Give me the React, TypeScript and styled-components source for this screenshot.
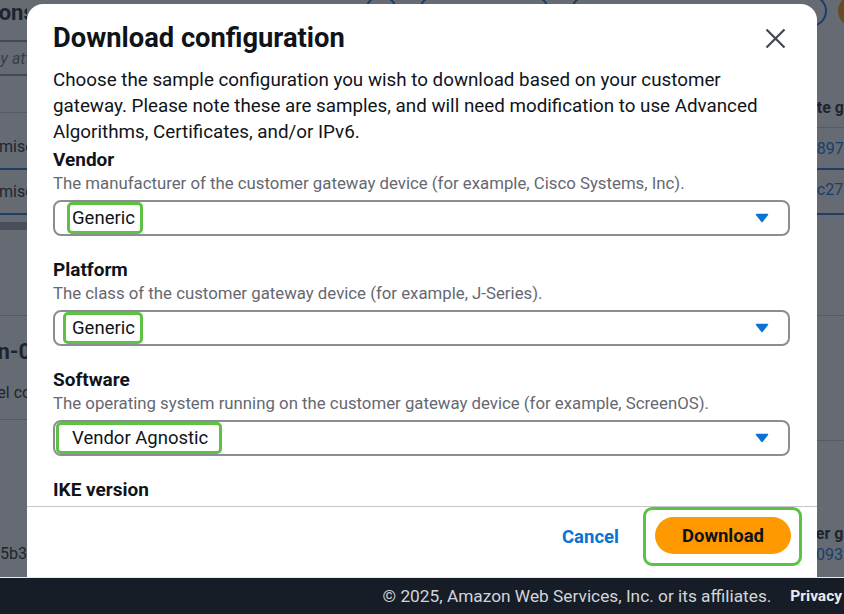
import styled, { createGlobalStyle } from "styled-components";

const GlobalStyle = createGlobalStyle`
  html, body {
    margin: 0;
    padding: 0;
    height: 100%;
    overflow: hidden;
  }
  body {
    font-family: Roboto, "Liberation Sans", Arial, sans-serif;
    color: #0f141a;
    background: #ffffff;
  }
  #root {
    height: 100%;
  }
`

const Page = styled.div`
  height: 100vh;
  display: flex;
  flex-direction: column;
`

const Main = styled.div`
  flex: 1;
  position: relative;
  overflow: hidden;
`

/* the console page behind the modal: only its edges show */
const Backdrop = styled.div`
  display: flex;
  flex-direction: column;
`

const TopBar = styled.div`
  display: flex;
  align-items: center;
  height: 32px;
  margin: -5px -26px 0 0;
  flex-shrink: 0;
`

const ToolButtons = styled.div`
  margin-left: auto;
  display: flex;
  gap: 22px;
`

const OutlineButton = styled.div<{ $w: number }>`
  width: ${p => p.$w}px;
  height: 32px;
  box-sizing: border-box;
  border: 2px solid #006ce0;
  border-radius: 16px;
`

const Avatar = styled.div`
  width: 32px;
  height: 32px;
  margin-left: 11px;
  border-radius: 50%;
  background: #ff9900;
`

const Row = styled.div<{ $h: number }>`
  display: flex;
  justify-content: space-between;
  align-items: flex-start;
  height: ${p => p.$h}px;
  flex-shrink: 0;
`

const Peek = styled.div<{ $h: number; $pt?: number; $line?: string }>`
  width: 27px;
  height: ${p => p.$h}px;
  box-sizing: border-box;
  padding-top: ${p => p.$pt ?? 0}px;
  overflow: hidden;
  display: flex;
  flex-direction: column;
  align-items: flex-start;
  border-bottom: ${p => p.$line ?? "none"};
  flex-shrink: 0;
`

const BgText = styled.span<{ $shift?: number; $size?: number; $bold?: boolean; $color?: string; $lh?: number; $gap?: number }>`
  display: block;
  flex: none;
  white-space: nowrap;
  margin-left: ${p => p.$shift ?? 0}px;
  margin-top: ${p => p.$gap ?? 0}px;
  font-size: ${p => p.$size ?? 16}px;
  line-height: ${p => p.$lh ?? 22}px;
  font-weight: ${p => (p.$bold ? 700 : 400)};
  color: ${p => p.$color ?? "#0f141a"};
`

const SearchBox = styled.div<{ $shift: number }>`
  flex: none;
  width: 420px;
  height: 36px;
  margin-left: ${p => p.$shift}px;
  box-sizing: border-box;
  border: 2px solid #8c8c94;
  border-radius: 8px;
  padding: 0 12px;
  display: flex;
  align-items: center;
  font-size: 16px;
  font-style: italic;
  color: #656871;
  white-space: nowrap;
`

const ScrollBar = styled.div`
  width: 27px;
  height: 8px;
  margin-top: 7px;
  background: #9ea3ab;
`

const Overlay = styled.div`
  position: absolute;
  inset: 0;
  background: rgba(35, 43, 55, 0.7);
  display: flex;
  justify-content: center;
  padding-top: 4px;
  box-sizing: border-box;
`

const Modal = styled.div`
  width: 790px;
  background: #ffffff;
  border-radius: 16px 16px 0 0;
  display: flex;
  flex-direction: column;
  overflow: hidden;
`

const ModalHeader = styled.div`
  display: flex;
  justify-content: space-between;
  align-items: flex-start;
  padding: 18px 26px 0 26px;
`

const Title = styled.h2`
  margin: 0;
  font-size: 27.3px;
  line-height: 32px;
  font-weight: 700;
  color: #0f141a;
`

const CloseButton = styled.button`
  width: 32px;
  height: 32px;
  border: none;
  background: none;
  padding: 0;
  display: flex;
  align-items: center;
  justify-content: center;
  cursor: pointer;
`

const ModalBody = styled.div`
  flex: 1;
  overflow: hidden;
  padding: 13px 27px 0 26px;
`

const Intro = styled.p`
  margin: 0;
  max-width: 718px;
  font-size: 18.8px;
  line-height: 26px;
  color: #0f141a;
`

const Field = styled.div`
  margin-top: 22px;
  &:first-of-type {
    margin-top: 3px;
  }
`

const Label = styled.div`
  font-size: 19px;
  line-height: 24px;
  font-weight: 700;
  color: #0f141a;
`

const Description = styled.div`
  font-size: 16.8px;
  line-height: 22px;
  color: #656871;
`

const Select = styled.div<{ $pad: number }>`
  margin-top: 6px;
  height: 36px;
  box-sizing: border-box;
  border: 2px solid #8c8c94;
  border-radius: 8px;
  padding: 0 19px 0 ${p => p.$pad}px;
  display: flex;
  align-items: center;
  justify-content: space-between;
`

const Highlight = styled.span<{ $l: number; $r: number }>`
  height: 32px;
  box-sizing: border-box;
  border: 3px solid #5ec143;
  border-radius: 5px;
  padding: 0 ${p => p.$r}px 0 ${p => p.$l}px;
  display: flex;
  align-items: center;
  font-size: 18.5px;
  color: #0f141a;
`

const ModalFooter = styled.div`
  border-top: 1px solid #c6c6cd;
  display: flex;
  justify-content: flex-end;
  align-items: center;
  gap: 15px;
  padding: 0 15px 11px 0;
`

const CancelButton = styled.button`
  border: none;
  background: none;
  padding: 4px 9px 4px 8px;
  font-family: inherit;
  font-size: 18.5px;
  font-weight: 700;
  color: #0972d3;
  cursor: pointer;
`

const ButtonHighlight = styled.div`
  border: 3px solid #5ec143;
  border-radius: 9px;
  padding: 7px 8px 9px 9px;
`

const PrimaryButton = styled.button`
  height: 37px;
  border: none;
  border-radius: 20px;
  padding: 0 27px;
  background: #ff9900;
  font-family: inherit;
  font-size: 18.5px;
  font-weight: 700;
  color: #0f141a;
  cursor: pointer;
`

const Footer = styled.footer`
  height: 37px;
  flex-shrink: 0;
  box-sizing: border-box;
  border-top: 1px solid #e9ebed;
  background: #161d26;
  width: calc(100% + 240px);
  display: flex;
  justify-content: flex-end;
  align-items: center;
  gap: 19px;
  padding-right: 24px;
  font-size: 17.3px;
  color: #d1d5db;
  white-space: nowrap;
`

const FooterLink = styled.span`
  font-size: 15.5px;
  font-weight: 700;
  color: #e9ebed;
`

function Caret() {
    return <svg width="14" height="10" viewBox="0 0 14 10">
        <path d="M1.5 1.5 H12.5 L7 8.5 Z" fill="#0972d3" stroke="#0972d3" strokeWidth="1.5" strokeLinejoin="round"/>
    </svg>
}

function CloseIcon() {
    return <svg width="21" height="21" viewBox="0 0 21 21">
        <path d="M1.5 1.5 L19.5 19.5 M19.5 1.5 L1.5 19.5" stroke="#424650" strokeWidth="2.2" fill="none"/>
    </svg>
}

const fields = [
    {
        label: "Vendor",
        description: "The manufacturer of the customer gateway device (for example, Cisco Systems, Inc).",
        value: "Generic",
        pad: 12, l: 2, r: 5,
    },
    {
        label: "Platform",
        description: "The class of the customer gateway device (for example, J-Series).",
        value: "Generic",
        pad: 8, l: 6, r: 5,
    },
    {
        label: "Software",
        description: "The operating system running on the customer gateway device (for example, ScreenOS).",
        value: "Vendor Agnostic",
        pad: 1, l: 13, r: 11,
    },
]

const line = "1px solid #c6c6cd"
const blueLine = "2px solid #0972d3"

function ConsolePage() {
    return <Backdrop>
        <TopBar>
            <Peek $h={32} $pt={6}>
                <BgText $shift={-136} $size={22} $bold $lh={24}>VPN connections (2)</BgText>
            </Peek>
            <ToolButtons>
                <OutlineButton $w={32}/>
                <OutlineButton $w={130}/>
                <OutlineButton $w={256}/>
            </ToolButtons>
            <Avatar/>
        </TopBar>
        <Row $h={53}>
            <Peek $h={53} $pt={13}>
                <SearchBox $shift={-184}>Filter VPN connections by attribute or search by keyword</SearchBox>
            </Peek>
        </Row>
        <Row $h={48}>
            <Peek $h={33} $line={line}/>
            <Peek $h={48} $pt={17} $line={line}>
                <BgText $shift={-42} $bold>Remote gateway</BgText>
            </Peek>
        </Row>
        <Row $h={42}>
            <Peek $h={42} $pt={8} $line={blueLine}>
                <BgText $shift={-48}>On-premises office</BgText>
            </Peek>
            <Peek $h={42} $pt={10} $line={blueLine}>
                <BgText $shift={-43} $color="#006ce0">cgw-0897e1f4c6</BgText>
            </Peek>
        </Row>
        <Row $h={45}>
            <Peek $h={45} $pt={11} $line={blueLine}>
                <BgText $shift={-48}>On-premises lab</BgText>
            </Peek>
            <Peek $h={45} $pt={9} $line={blueLine}>
                <BgText $shift={-43} $color="#006ce0">cgw-0c27d5a9b1</BgText>
            </Peek>
        </Row>
        <Row $h={15}>
            <ScrollBar/>
        </Row>
        <Row $h={86}>
            <Peek $h={86} $line={line}/>
            <Peek $h={86} $line={line}/>
        </Row>
        <Row $h={140}>
            <Peek $h={104} $pt={21} $line={line}>
                <BgText $shift={-26} $size={22} $bold $lh={30}>vpn-0a4e1c7f2</BgText>
                <BgText $shift={-38} $lh={24} $gap={14}>Tunnel configuration</BgText>
            </Peek>
            <Peek $h={125} $line={line}/>
        </Row>
        <Row $h={120}>
            <Peek $h={120} $pt={87}>
                <BgText $shift={-42}>vgw-05b3a9c1e</BgText>
            </Peek>
            <Peek $h={120} $pt={67}>
                <BgText $shift={-57} $bold>Customer gateway</BgText>
                <BgText $shift={-43} $color="#006ce0" $lh={20}>vgw-0093f1a7e2</BgText>
            </Peek>
        </Row>
    </Backdrop>
}

function DownloadModal() {
    return <Modal>
        <ModalHeader>
            <Title>Download configuration</Title>
            <CloseButton aria-label="Close"><CloseIcon/></CloseButton>
        </ModalHeader>
        <ModalBody>
            <Intro>
                Choose the sample configuration you wish to download based on your customer gateway.
                Please note these are samples, and will need modification to use Advanced Algorithms,
                Certificates, and/or IPv6.
            </Intro>
            {fields.map(f => (
                <Field key={f.label}>
                    <Label>{f.label}</Label>
                    <Description>{f.description}</Description>
                    <Select $pad={f.pad}>
                        <Highlight $l={f.l} $r={f.r}>{f.value}</Highlight>
                        <Caret/>
                    </Select>
                </Field>
            ))}
            <Field>
                <Label>IKE version</Label>
                <Description>The IKE version used by the customer gateway device.</Description>
                <Select $pad={17}>
                    <span>ikev2</span>
                    <Caret/>
                </Select>
            </Field>
        </ModalBody>
        <ModalFooter>
            <CancelButton>Cancel</CancelButton>
            <ButtonHighlight>
                <PrimaryButton>Download</PrimaryButton>
            </ButtonHighlight>
        </ModalFooter>
    </Modal>
}

export default function App() {
    return <>
        <GlobalStyle/>
        <Page>
            <Main>
                <ConsolePage/>
                <Overlay>
                    <DownloadModal/>
                </Overlay>
            </Main>
            <Footer>
                <span>© 2025, Amazon Web Services, Inc. or its affiliates.</span>
                <FooterLink>Privacy</FooterLink>
                <FooterLink>Terms</FooterLink>
                <FooterLink>Cookie preferences</FooterLink>
            </Footer>
        </Page>
    </>
}
